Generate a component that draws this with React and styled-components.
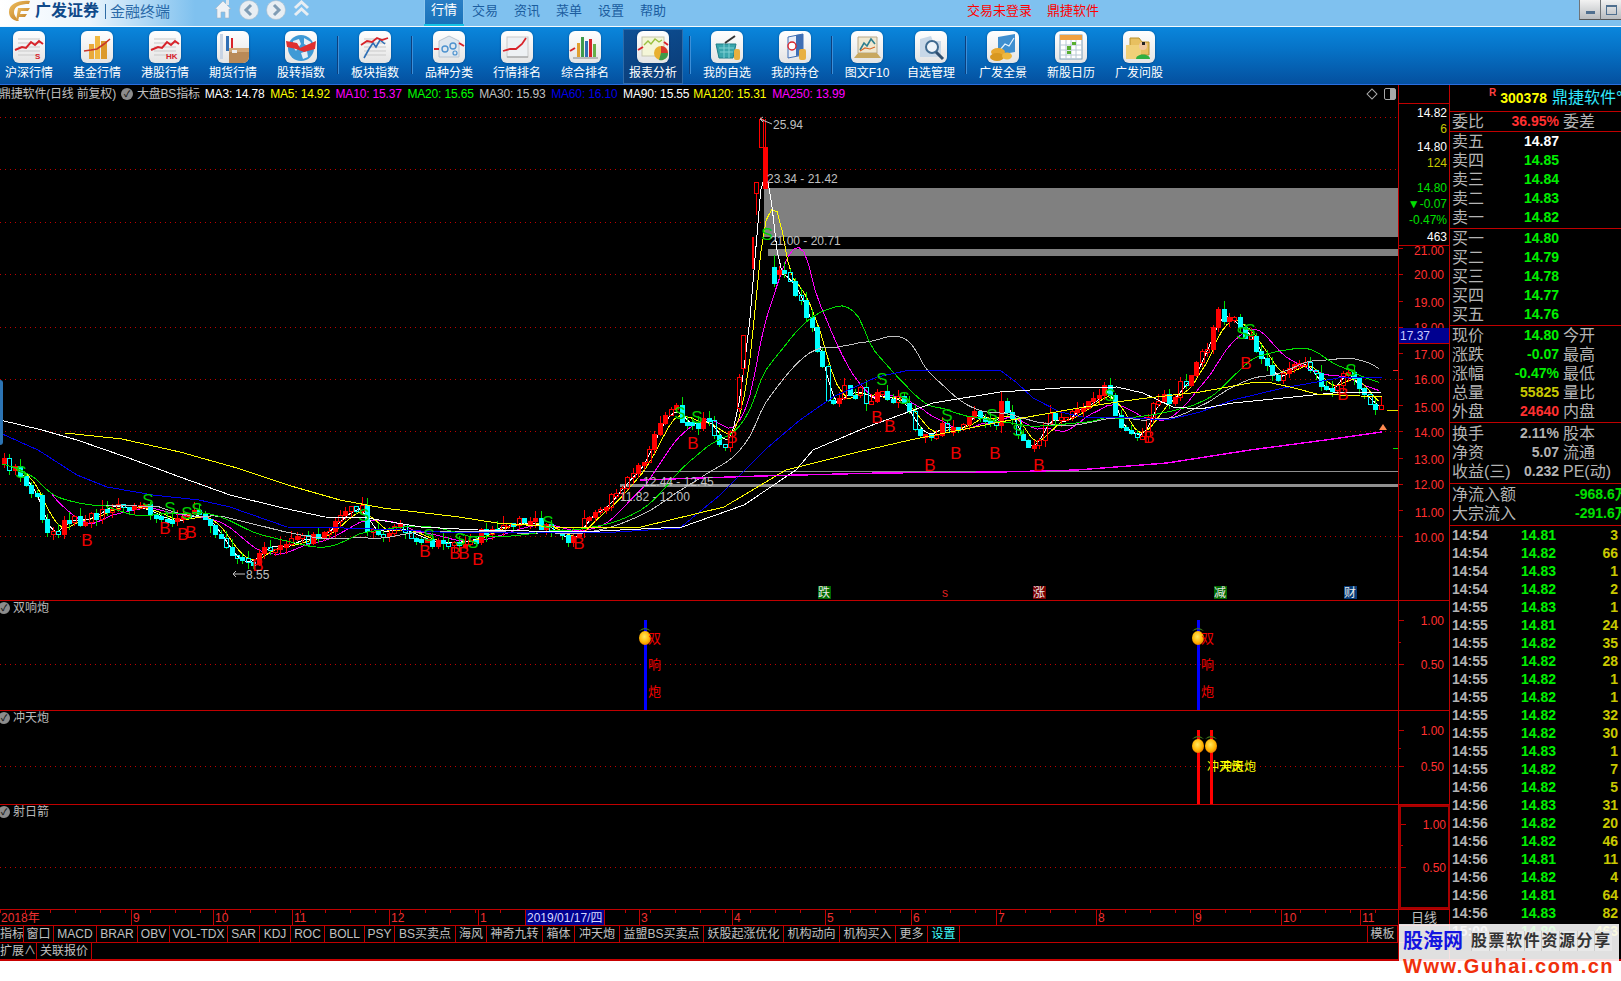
import { Fragment } from 'react';
import styled, { createGlobalStyle } from 'styled-components';

const RED_LINE = '#c00000';
const UI_FONT = '"Liberation Sans", "Noto Sans CJK SC", sans-serif';

const GlobalStyle = createGlobalStyle`
  html, body {
    margin: 0;
    background: #fff;
    overflow: hidden;
  }
  * {
    box-sizing: border-box;
  }
`;

/* ---------- chart data, all in screen pixels ---------- */

const priceKnots = [
  [0, 463], [8, 467], [19, 475], [27, 487], [36, 500], [44, 533], [55, 533], [63, 520], [80, 520], [92, 517],
  [107, 505], [122, 508], [142, 508], [157, 517], [176, 522], [188, 515], [203, 517], [216, 533], [230, 555],
  [237, 563], [253, 560], [264, 545], [283, 548], [295, 540], [318, 538], [329, 527], [348, 510], [360, 508],
  [365, 527], [383, 533], [394, 527], [413, 535], [432, 543], [448, 543], [471, 540], [486, 530], [517, 523],
  [543, 525], [563, 540], [574, 537], [586, 515], [600, 510], [625, 480], [640, 465], [650, 440], [660, 420],
  [673, 407], [683, 425], [697, 423], [707, 420], [720, 447], [730, 433], [733, 408], [738, 378], [742, 340],
  [748, 300], [754, 190], [760, 122], [764, 170], [770, 270], [783, 278], [789, 280], [795, 295], [807, 320],
  [815, 350], [820, 360], [825, 397], [833, 410], [842, 390], [847, 395], [852, 397], [857, 383], [865, 403],
  [877, 393], [883, 400], [893, 397], [905, 408], [913, 428], [930, 437], [938, 423], [948, 430], [957, 433],
  [965, 418], [980, 413], [992, 430], [1000, 403], [1010, 417], [1018, 443], [1033, 448], [1040, 430], [1045, 413],
  [1053, 423], [1067, 420], [1075, 407], [1088, 405], [1100, 393], [1106, 380], [1110, 407], [1115, 423],
  [1127, 433], [1140, 437], [1147, 417], [1155, 398], [1172, 402], [1180, 380], [1190, 380], [1198, 357],
  [1208, 340], [1215, 313], [1223, 317], [1233, 323], [1242, 333], [1250, 338], [1258, 357], [1268, 373],
  [1280, 380], [1287, 367], [1295, 360], [1305, 367], [1315, 380], [1322, 393], [1333, 387], [1343, 367],
  [1350, 380], [1357, 393], [1367, 398], [1373, 408], [1383, 410],
];

const ma60 = [
  [0, 433], [38, 450], [77, 475], [107, 487], [153, 495], [199, 500], [230, 507], [287, 527], [344, 528], [402, 530],
  [459, 533], [536, 532], [600, 533], [680, 528], [720, 495], [767, 448], [800, 420], [833, 397], [877, 377],
  [910, 370], [1000, 370], [1017, 383], [1033, 398], [1060, 412], [1083, 417], [1133, 418], [1167, 420],
  [1200, 412], [1233, 400], [1283, 388], [1317, 382], [1343, 377], [1382, 377],
];

const ma90 = [
  [0, 420], [42, 430], [77, 440], [126, 457], [180, 477], [230, 495], [283, 508], [325, 517], [367, 518], [421, 527],
  [478, 530], [579, 532], [682, 527], [744, 505], [796, 470], [813, 450], [867, 427], [933, 403], [1000, 392],
  [1060, 388], [1117, 387], [1143, 393], [1173, 407], [1200, 409], [1233, 403], [1283, 398], [1333, 393], [1382, 392],
];

const ma120 = [
  [65, 433], [122, 439], [180, 452], [237, 468], [291, 486], [340, 500], [383, 508], [459, 517], [497, 523],
  [555, 527], [641, 527], [724, 507], [786, 470], [858, 452], [910, 440], [1000, 422], [1067, 410], [1117, 402],
  [1147, 398], [1200, 392], [1250, 383], [1267, 382], [1290, 387], [1317, 394], [1382, 397],
];

const ma250 = [
  [640, 480], [760, 476], [880, 473], [1000, 472], [1077, 470], [1167, 463], [1250, 450], [1333, 439], [1382, 432],
];

const buyMarks = [
  [87, 540], [165, 528], [183, 534], [191, 532], [258, 565], [425, 551], [455, 553], [464, 553], [478, 559], [579, 543],
  [732, 437], [693, 443], [877, 417], [890, 426], [930, 465], [956, 453], [995, 453], [1039, 465], [1149, 437],
  [1246, 363], [1343, 394],
];

const sellMarks = [
  [21, 472], [148, 500], [170, 508], [187, 513], [197, 509], [364, 515], [429, 535], [460, 539], [473, 542], [548, 522],
  [767, 234], [680, 413], [697, 417], [882, 379], [904, 398], [947, 415], [992, 415], [1018, 430], [1110, 395],
  [1242, 333], [1250, 330], [1351, 370],
];

// the spike does not follow the interpolated series, it has gaps
const peakCandles = [
  { x: 737, top: 377, bottom: 408, high: 374, low: 412, up: true, solid: false },
  { x: 741, top: 335, bottom: 368, high: 335, low: 375, up: true, solid: false },
  { x: 750, top: 237, bottom: 268, high: 237, low: 268, up: true, solid: true, w: 1 },
  { x: 754, top: 182, bottom: 193, high: 182, low: 215, up: true, solid: false },
  { x: 759, top: 119, bottom: 147, high: 118, low: 147, up: true, solid: false },
  { x: 763, top: 147, bottom: 188, high: 119, low: 188, up: true, solid: true },
  { x: 772, top: 267, bottom: 283, high: 255, low: 287, up: false, solid: true },
];

const mainGrid = [117, 169, 222, 274, 327, 379, 431, 484, 536];

const mainScale = [
  ['21.00', 248, 250], ['20.00', 274, 274], ['19.00', 301, 302], ['18.00', 327, 327], ['17.00', 353, 354],
  ['16.00', 379, 379], ['15.00', 405, 407], ['14.00', 431, 432], ['13.00', 458, 459], ['12.00', 484, 484],
  ['11.00', 510, 512], ['10.00', 536, 537],
];

function makeRandom(seed) {
  let s = seed;
  return () => {
    s = (s * 16807) % 2147483647;
    return (s - 1) / 2147483646;
  };
}

function interpolate(points, x) {
  for (let i = 1; i < points.length; i++) {
    if (x <= points[i][0]) {
      const [x0, y0] = points[i - 1];
      const [x1, y1] = points[i];
      return y0 + ((y1 - y0) * (x - x0)) / (x1 - x0 || 1);
    }
  }
  return points[points.length - 1][1];
}

function buildCandles() {
  const random = makeRandom(4711);
  const list = [];
  let prev = 463;
  for (let x = 2; x <= 1384; x += 5.42) {
    const base = interpolate(priceKnots, x);
    const close = base + (random() - 0.5) * 11;
    const top = Math.min(prev, close);
    let bottom = Math.max(prev, close);
    if (bottom - top < 3) bottom = top + 3;
    const up = close < prev;
    list.push({
      x,
      base,
      top,
      bottom,
      up,
      high: top - random() * 9,
      low: bottom + random() * 7,
      solid: up ? random() > 0.45 : random() > 0.2,
    });
    prev = close;
  }
  return list;
}

const candles = buildCandles();

function movingAverage(period) {
  return candles
    .map((c, i) => {
      const from = Math.max(0, i - period + 1);
      let sum = 0;
      for (let k = from; k <= i; k++) sum += candles[k].base;
      return `${c.x.toFixed(1)},${(sum / (i - from + 1)).toFixed(1)}`;
    })
    .join(' ');
}

const toPoints = (list) => list.map((p) => p.join(',')).join(' ');

/* ---------- top bar ---------- */

const TopBar = styled.header`
  display: flex;
  height: 27px;
  background: #7fc1ef;
  border-bottom: 1px solid #f4fbff;
  font-family: ${UI_FONT};
`;

const LogoBlock = styled.div`
  display: flex;
  align-items: center;
  width: 214px;
  padding: 0 0 4px 8px;
  background: linear-gradient(90deg, #fff 0, #e9f4fc 90px, #7fc1ef 195px);
`;

const BrandName = styled.span`
  margin-left: 3px;
  font-size: 16px;
  line-height: 18px;
  font-weight: 700;
  color: #0f4a8a;
  white-space: nowrap;
`;

const ProductName = styled.span`
  margin-left: 6px;
  padding-left: 4px;
  border-left: 1px solid #2f6ca5;
  font-size: 15px;
  line-height: 15px;
  color: #2a6aa8;
  white-space: nowrap;
`;

const NavIcons = styled.div`
  display: flex;
  align-items: flex-start;
  gap: 7px;
  width: 210px;
`;

const MenuTab = styled.div`
  display: flex;
  align-items: center;
  justify-content: center;
  width: ${(p) => (p.$active ? '40px' : '42px')};
  padding-bottom: 4px;
  font-size: 13px;
  line-height: 16px;
  color: ${(p) => (p.$active ? '#fff' : '#1b5d9f')};
  background: ${(p) => (p.$active ? 'linear-gradient(180deg, #2a7fc6, #1872ba)' : 'none')};
  border-bottom: ${(p) => (p.$active ? '2px solid #16c4e6' : 'none')};
  box-shadow: ${(p) => (p.$active ? 'inset 1px 0 #8fc8ee, inset -1px 0 #8fc8ee' : 'none')};
`;

const LoginStatus = styled.div`
  display: flex;
  align-items: center;
  gap: 15px;
  margin-left: 293px;
  padding-bottom: 4px;
  font-size: 13px;
  line-height: 16px;
  color: #ff0000;
`;

const WindowButtons = styled.div`
  display: flex;
  margin-left: auto;
  height: 20px;
`;

const WindowButton = styled.div`
  display: flex;
  align-items: center;
  justify-content: center;
  width: 21px;
  background: linear-gradient(180deg, #f2f2f2, #b8bcc0);
  border-left: 1px solid #6f7478;
  border-bottom: 1px solid #555;
`;

const MinimizeMark = styled.i`
  display: block;
  width: 9px;
  height: 3px;
  margin-top: 6px;
  background: #4f6f8f;
`;

const MaximizeMark = styled.i`
  display: block;
  width: 11px;
  height: 10px;
  border: 1px solid #4f6f8f;
  border-top-width: 2px;
`;

/* ---------- tool bar ---------- */

const ToolBar = styled.nav`
  display: flex;
  width: 1626px;
  height: 58px;
  margin-left: -5px;
  background: linear-gradient(180deg, #0a86dc 0, #0672c6 40%, #04509f 100%);
  border-bottom: 1px solid #2a6ee0;
  font-family: ${UI_FONT};
`;

const ToolItem = styled.div`
  position: relative;
  display: flex;
  flex-direction: column;
  align-items: center;
  flex: none;
  width: ${(p) => p.$w || 68}px;
  padding-top: 4px;
  font-size: 12px;
  color: #fff;
  white-space: nowrap;

  &::before {
    content: '';
    display: ${(p) => (p.$selected ? 'block' : 'none')};
    position: absolute;
    top: 2px;
    bottom: 0;
    left: 4px;
    right: 4px;
    background: linear-gradient(160deg, #0d4f94, #0a3a74);
    border: 1px solid #2e6ba8;
  }
`;

const IconTile = styled.div`
  position: relative;
  width: 32px;
  height: 32px;
  border-radius: 6px;
  background: linear-gradient(180deg, #ffffff, #e4e4e4);
  box-shadow: 0 0 2px rgba(0, 30, 70, 0.55);
  overflow: hidden;
`;

const ToolLabel = styled.span`
  position: relative;
  margin-top: 2px;
  line-height: 16px;
`;

const ToolSeparator = styled.div`
  flex: none;
  width: 6px;
  margin: 9px 0 10px;
  background: linear-gradient(90deg, transparent 2px, #0c3f7d 2px, #0c3f7d 3px, #3d8fd8 3px, #3d8fd8 4px, transparent 4px);
`;

const ToolGlyph = styled.svg`
  display: block;
  font-family: ${UI_FONT};
`;

const lineGrid = (
  <g stroke="#c9c9c9" strokeWidth="1">
    <path d="M5 8H27M5 12H27M5 16H27M5 20H27M5 24H27" />
  </g>
);

const toolIcons = {
  shanghai: (
    <>
      {lineGrid}
      <polyline points="2,19 9,16 13,17 18,11 22,14 26,10 30,13" fill="none" stroke="#d8232a" strokeWidth="2" />
      <text x="22" y="28" fontSize="8" fontWeight="700" fill="#d8232a">S</text>
    </>
  ),
  fund: (
    <>
      <rect x="8" y="13" width="5" height="15" fill="#e9a93a" />
      <rect x="14" y="5" width="5" height="23" fill="#f0b840" />
      <rect x="20" y="10" width="6" height="18" fill="#dc9a2c" />
      <polyline points="3,20 10,19 16,18 23,13 29,8" fill="none" stroke="#c8352a" strokeWidth="1.6" />
    </>
  ),
  hongkong: (
    <>
      {lineGrid}
      <polyline points="2,19 9,16 13,17 18,11 22,14 26,10 30,13" fill="none" stroke="#d8232a" strokeWidth="2" />
      <text x="17" y="28" fontSize="8" fontWeight="700" fill="#d8232a">HK</text>
    </>
  ),
  futures: (
    <>
      <rect x="3" y="3" width="3" height="25" fill="#c8d4e4" />
      <rect x="9" y="5" width="3" height="15" fill="#2f6fb5" />
      <rect x="14" y="7" width="2" height="12" fill="#d8232a" />
      <path d="M12 17H32V32H12Z" fill="#b98a58" />
      <path d="M12 17H32V21H12Z" fill="#d2a878" />
      <rect x="15" y="19" width="5" height="3" fill="#eee" />
    </>
  ),
  globe: (
    <>
      <circle cx="16" cy="17" r="13" fill="#3f9ad6" />
      <path d="M8 10l6-2 2 5-5 7-3-4ZM19 7l7 4-1 5-6-3ZM16 22l6-2 1 6-5 2Z" fill="#e8eef4" />
      <path d="M1 10l11 2 3 5 9-4 7-3-1 8-11 3-8-3-9-2Z" fill="#e03030" />
    </>
  ),
  board: (
    <>
      {lineGrid}
      <polyline points="5,27 10,18 14,12 17,16 21,9 26,13" fill="none" stroke="#2f6fb5" strokeWidth="1.6" />
      <polyline points="2,14 8,10 13,11 18,7 23,9 29,7" fill="none" stroke="#d8232a" strokeWidth="1.8" />
    </>
  ),
  category: (
    <>
      <path d="M6 10L16 5L26 10V26H6Z" fill="#dfe7ef" stroke="#b8c4d0" />
      <circle cx="12" cy="18" r="3" fill="none" stroke="#4f93cf" strokeWidth="1.4" />
      <circle cx="20" cy="15" r="3" fill="none" stroke="#4f93cf" strokeWidth="1.4" />
      <circle cx="22" cy="22" r="2" fill="none" stroke="#4f93cf" strokeWidth="1.2" />
      <path d="M1 18H6M26 12L31 15" stroke="#d8232a" strokeWidth="2" />
    </>
  ),
  ranking: (
    <>
      <rect x="6" y="6" width="21" height="20" fill="#eef1f4" stroke="#c9c9c9" />
      <polyline points="2,20 9,18 15,18 21,13 25,7" fill="none" stroke="#d8232a" strokeWidth="1.8" />
      <path d="M6 26H27" stroke="#999" />
    </>
  ),
  composite: (
    <>
      <rect x="8" y="12" width="3" height="14" fill="#e0a030" />
      <rect x="12" y="6" width="3" height="20" fill="#3f9a4a" />
      <rect x="16" y="10" width="3" height="16" fill="#2f6fb5" />
      <rect x="20" y="8" width="3" height="18" fill="#d8232a" />
      <rect x="24" y="13" width="3" height="13" fill="#68b04a" />
      <path d="M4 27H29" stroke="#888" />
      <path d="M1 20L6 17" stroke="#d8232a" strokeWidth="2" />
    </>
  ),
  report: (
    <>
      <rect x="5" y="6" width="22" height="19" fill="#f4f6d8" stroke="#c8c8b0" />
      <polyline points="7,14 11,10 14,13 18,8 22,11 25,9" fill="none" stroke="#9ac040" strokeWidth="1.4" />
      <path d="M1 19L6 16M27 11L31 14" stroke="#d8232a" strokeWidth="2" />
      <circle cx="24" cy="22" r="7" fill="#e8b030" />
      <path d="M24 22V15A7 7 0 0 1 31 22Z" fill="#d8382a" />
      <path d="M24 22H31A7 7 0 0 1 22 29Z" fill="#3f9a4a" />
    </>
  ),
  basket: (
    <>
      <path d="M5 13H25L22 27H8Z" fill="#3aa6ad" stroke="#1f7e88" />
      <path d="M8 17H23M9 21H22M13 13V27M18 13V27" stroke="#7fd0d4" />
      <path d="M14 12L24 5" stroke="#333" strokeWidth="2" />
      <rect x="23" y="18" width="6" height="11" rx="2" fill="#e8b040" />
    </>
  ),
  position: (
    <>
      <path d="M9 6L24 3V24L9 27Z" fill="#e8eef8" stroke="#3f6fb5" />
      <path d="M17 4L24 3V24L17 25Z" fill="#3f6fb5" />
      <circle cx="13" cy="15" r="4" fill="#fff" stroke="#d8232a" strokeWidth="1.4" />
      <rect x="20" y="18" width="7" height="11" rx="2" fill="#e8b040" />
    </>
  ),
  f10: (
    <>
      <path d="M7 6H26V22H7Z" fill="#f0e8d0" stroke="#b8a888" />
      <polyline points="9,19 13,12 16,15 20,8 24,13" fill="none" stroke="#2f7f8f" strokeWidth="1.6" />
      <polyline points="9,20 14,17 19,18 24,16" fill="none" stroke="#d86a2a" strokeWidth="1.2" />
      <path d="M3 27L7 22H26L30 27Z" fill="#c8a860" />
    </>
  ),
  manage: (
    <>
      <path d="M5 8L16 5L18 10H26V26H5Z" fill="#c8d8e8" />
      <circle cx="17" cy="16" r="6" fill="#eef4fa" stroke="#3f6a90" strokeWidth="2" />
      <path d="M21 21L28 28" stroke="#2f4f70" strokeWidth="3" />
    </>
  ),
  overview: (
    <>
      <path d="M11 6L28 3V21L11 24Z" fill="#3f8fd0" />
      <polyline points="13,19 18,13 22,15 27,7" fill="none" stroke="#e8f4ff" strokeWidth="1.2" />
      <ellipse cx="11" cy="21" rx="7" ry="4" fill="#e8a830" />
      <ellipse cx="10" cy="26" rx="7" ry="4" fill="#d89820" />
      <ellipse cx="20" cy="25" rx="5" ry="3.5" fill="#eeb840" />
    </>
  ),
  calendar: (
    <>
      <rect x="5" y="4" width="22" height="24" fill="#fff" stroke="#7f9fb8" />
      <rect x="5" y="4" width="22" height="5" fill="#f0a040" />
      <path d="M5 14H27M5 19H27M5 24H27M11 9V28M16 9V28M21 9V28" stroke="#b8c8d4" />
      <rect x="12" y="15" width="4" height="4" fill="#58b030" />
      <rect x="17" y="11" width="4" height="3" fill="#58b030" />
      <rect x="12" y="20" width="4" height="3" fill="#58b030" />
    </>
  ),
  ask: (
    <>
      <path d="M7 7H16L19 11H26V24H7Z" fill="#e8c060" stroke="#b8902c" />
      <path d="M3 14H18V28H3Z" fill="#f0d078" />
      <circle cx="20" cy="15" r="4" fill="#f0c8a0" />
      <path d="M19 11H22V14H19Z" fill="#222" />
      <path d="M13 28C13 22 27 22 27 28Z" fill="#30b040" />
    </>
  ),
};

const toolSections = [
  [
    ['沪深行情', 'shanghai'], ['基金行情', 'fund'], ['港股行情', 'hongkong'], ['期货行情', 'futures'], ['股转指数', 'globe'],
  ],
  [['板块指数', 'board']],
  [['品种分类', 'category'], ['行情排名', 'ranking'], ['综合排名', 'composite'], ['报表分析', 'report', 68, true]],
  [['我的自选', 'basket'], ['我的持仓', 'position']],
  [['图文F10', 'f10', 64], ['自选管理', 'manage', 64]],
  [['广发全景', 'overview'], ['新股日历', 'calendar'], ['广发问股', 'ask']],
];

/* ---------- chart columns ---------- */

const Workspace = styled.main`
  display: flex;
  height: 876px;
  background: #000;
  border-bottom: 2px solid #c80000;
  font-family: ${UI_FONT};
`;

const ChartColumn = styled.div`
  display: flex;
  flex-direction: column;
  flex: none;
  width: 1450px;
`;

const ChartRow = styled.section`
  display: flex;
  flex: ${(p) => (p.$h ? 'none' : '1')};
  height: ${(p) => (p.$h ? `${p.$h}px` : 'auto')};
  border-bottom: ${(p) => (p.$open ? 'none' : `1px solid ${RED_LINE}`)};
`;

const Pane = styled.div`
  position: relative;
  flex: none;
  width: 1398px;
`;

const AxisCell = styled.div`
  display: flex;
  flex-direction: column;
  flex: none;
  width: 52px;
  border-left: 1px solid ${RED_LINE};
  border-right: 1px solid ${RED_LINE};
`;

const ChartSvg = styled.svg`
  display: block;
  font-family: ${UI_FONT};
`;

const Legend = styled.div`
  position: absolute;
  top: -1px;
  left: -1px;
  right: 0;
  display: flex;
  align-items: center;
  height: 19px;
  font-size: 12px;
  line-height: 16px;
  color: #c0c0c0;
  white-space: nowrap;
`;

const LegendTitle = styled.span`
  letter-spacing: -0.2px;
`;

const LegendItem = styled.span`
  margin-left: ${(p) => p.$gap || 5.6}px;
  color: ${(p) => p.$color};
  letter-spacing: -0.16px;
`;

const ToggleDot = styled.i`
  display: inline-flex;
  align-items: center;
  justify-content: center;
  width: 12px;
  height: 12px;
  margin: ${(p) => p.$margin || '0 4px 0 5px'};
  border-radius: 50%;
  background: #8c8c8c;
  color: #222;
  font-size: 9px;
  font-style: normal;
  font-weight: 700;
`;

const LegendTools = styled.div`
  display: flex;
  align-items: center;
  gap: 8px;
  margin-left: auto;
  margin-right: 2px;
`;

const DiamondMark = styled.i`
  display: block;
  width: 8px;
  height: 8px;
  border: 1px solid #a8a8a8;
  transform: rotate(45deg);
`;

const PanelMark = styled.i`
  display: block;
  width: 12px;
  height: 12px;
  border: 1px solid #a8a8a8;
  border-radius: 2px;
  background: linear-gradient(90deg, transparent 5px, #a8a8a8 5px);
`;

const SideHandle = styled.div`
  position: absolute;
  top: 295px;
  left: 0;
  width: 3px;
  height: 65px;
  border-radius: 0 3px 3px 0;
  background: #2c74b4;
`;

const PaneTitle = styled.div`
  position: absolute;
  top: -1px;
  left: -2px;
  display: flex;
  align-items: center;
  height: 16px;
  font-size: 12px;
  line-height: 16px;
  color: #b8b8b8;
`;

const AxisHead = styled.div`
  flex: none;
  height: 19px;
  border-bottom: 1px solid ${RED_LINE};
`;

const AxisInfo = styled.div`
  flex: none;
  height: 142px;
  padding: 1px 2px 0 0;
  border-bottom: 1px solid ${RED_LINE};
  font-size: 12px;
  line-height: 16px;
  text-align: right;
`;

const InfoValue = styled.div`
  height: 16.4px;
  margin-top: ${(p) => p.$gap || 0}px;
  color: ${(p) => p.$color};
`;

const AxisBox = styled.div`
  flex: 1;
  margin: ${(p) => (p.$boxed ? '0 -1px 0 0' : 0)};
  border: ${(p) => (p.$boxed ? '2px solid #a80000' : 'none')};
`;

const AxisCaption = styled.div`
  height: 100%;
  font-size: 13px;
  line-height: 16px;
  text-align: center;
  color: #c0c0c0;
`;

/* ---------- time axis and tabs ---------- */

const TimeAxis = styled.div`
  display: flex;
  flex: none;
  width: 1398px;
  background: repeating-linear-gradient(90deg, ${RED_LINE} 0 1px, transparent 1px 25px) 0 0 / 100% 3px no-repeat;
`;

const TimeCell = styled.div`
  flex: none;
  width: ${(p) => p.$w}px;
  padding-left: 1px;
  border-left: ${(p) => (p.$first ? 'none' : `1px solid ${RED_LINE}`)};
  font-size: 12px;
  line-height: 16px;
  color: ${(p) => (p.$picked ? '#d8d8ff' : '#f03030')};
  background: ${(p) => (p.$picked ? '#000090' : 'none')};
  white-space: nowrap;
`;

const TabStrip = styled.div`
  display: flex;
  flex: none;
  width: 1398px;
  border-right: ${(p) => (p.$bare ? 'none' : `1px solid ${RED_LINE}`)};
`;

const TabItem = styled.div`
  flex: none;
  width: ${(p) => p.$w}px;
  border-right: ${(p) => (p.$bare ? 'none' : `1px solid ${RED_LINE}`)};
  border-left: ${(p) => (p.$left ? `1px solid ${RED_LINE}` : 'none')};
  margin-left: ${(p) => (p.$push ? 'auto' : 0)};
  font-size: 12px;
  line-height: 17px;
  text-align: center;
  color: ${(p) => (p.$active ? '#40ffff' : '#c0c0c0')};
  white-space: nowrap;
  overflow: hidden;
`;

/* ---------- quote panel ---------- */

const QuotePanel = styled.aside`
  flex: none;
  width: 171px;
  overflow: hidden;
`;

const QuoteTitle = styled.div`
  display: flex;
  align-items: center;
  height: 27px;
  padding-left: 39px;
  border-bottom: 1px solid ${RED_LINE};
  white-space: nowrap;
`;

const RiskFlag = styled.span`
  align-self: flex-start;
  margin: 2px 4px 0 0;
  font-size: 10px;
  font-weight: 700;
  color: #ff4040;
`;

const StockCode = styled.span`
  font-size: 14px;
  line-height: 16px;
  font-weight: 700;
  color: #ffff00;
`;

const StockName = styled.span`
  margin-left: 5px;
  font-size: 16px;
  line-height: 18px;
  color: #30e8ff;
`;

const QuoteSection = styled.div`
  display: flex;
  flex-direction: column;
  justify-content: center;
  height: ${(p) => p.$h}px;
  padding-bottom: 1px;
  border-bottom: 1px solid ${RED_LINE};
`;

const QuoteRow = styled.div`
  display: grid;
  grid-template-columns: 49px 58px 1fr;
  align-items: center;
  height: 19px;
  padding-left: 2px;
  font-size: 16px;
  line-height: 19px;
  color: #b4b4b4;
  white-space: nowrap;
`;

const QuoteValue = styled.span`
  font-size: 14px;
  font-weight: 700;
  text-align: right;
  color: ${(p) => p.$color};
`;

const QuoteSide = styled.span`
  padding-left: 4px;
`;

const FlowRow = styled.div`
  display: grid;
  grid-template-columns: 123px 1fr;
  align-items: center;
  height: 19px;
  padding-left: 2px;
  font-size: 16px;
  line-height: 19px;
  color: #b4b4b4;
  white-space: nowrap;
`;

const FlowValue = styled.span`
  font-size: 14px;
  font-weight: 700;
  color: #00e000;
`;

const TickRow = styled.div`
  display: grid;
  grid-template-columns: 69px 38px 1fr;
  align-items: center;
  height: 18px;
  padding: 0 3px 0 2px;
  font-size: 14px;
  font-weight: 700;
`;

const TickTime = styled.span`
  color: #b4b4b4;
`;

const TickPrice = styled.span`
  color: #00f000;
`;

const TickVolume = styled.span`
  text-align: right;
  color: #c8c800;
`;

const Frame = styled.div`
  position: relative;
  width: 1621px;
  height: 981px;
  overflow: hidden;
`;

const Watermark = styled.div`
  position: absolute;
  top: 924px;
  left: 1399px;
  width: 220px;
  height: 57px;
  padding: 4px 4px 0;
  background: rgba(255, 255, 255, 0.88);
  font-family: ${UI_FONT};
`;

const WatermarkTop = styled.div`
  display: flex;
  align-items: center;
  height: 26px;
  white-space: nowrap;
`;

const WatermarkSite = styled.span`
  flex: none;
  font-size: 20px;
  line-height: 24px;
  font-weight: 700;
  color: #1414e0;
`;

const WatermarkSlogan = styled.span`
  flex: none;
  margin-left: 8px;
  font-family: "Liberation Serif", "Noto Sans CJK SC", serif;
  font-size: 16px;
  line-height: 20px;
  font-weight: 700;
  letter-spacing: 1.6px;
  color: #333;
  background: repeating-linear-gradient(90deg, #ccc 0 1px, #e8e8e8 1px 17.6px);
`;

const WatermarkUrl = styled.div`
  font-size: 20px;
  font-weight: 700;
  line-height: 24px;
  letter-spacing: 1.5px;
  color: #f0300c;
  white-space: nowrap;
`;

/* ---------- small chart parts ---------- */

const Fruit = ({ x, y }) => (
  <g>
    <path d={`M${x - 6} ${y - 7}Q${x} ${y - 13} ${x + 6} ${y - 7}L${x} ${y - 9}Z`} fill="#3f7a1a" />
    <ellipse cx={x} cy={y} rx="6" ry="7" fill="url(#fruitGold)" />
  </g>
);

const MarkerTag = ({ x, bg, children, color = '#e8e8e8' }) => (
  <g>
    <rect x={x - 6} y={586} width="13" height="13" fill={bg} />
    <text x={x} y={597} fontSize="12" textAnchor="middle" fill={color}>{children}</text>
  </g>
);

const Scale = ({ top, height, items, minor = [] }) => (
  <ChartSvg width="50" height={height} viewBox={`1399 ${top} 50 ${height}`}>
    {items.map(([label, tick, textY]) => (
      <g key={label}>
        <line x1="1399" x2="1404" y1={tick + 0.5} y2={tick + 0.5} stroke={RED_LINE} />
        <text x="1444" y={textY + 5} fontSize="12" textAnchor="end" fill="#ff3030">{label}</text>
      </g>
    ))}
    {minor.map((y) => (
      <line key={y} x1="1399" x2="1401" y1={y + 0.5} y2={y + 0.5} stroke={RED_LINE} />
    ))}
  </ChartSvg>
);

const PriceScale = () => (
  <ChartSvg width="50" height="354" viewBox="1399 246 50 354">
    {mainScale.map(([label, tick, textY]) => (
      <g key={label}>
        <line x1="1399" x2="1403" y1={tick + 0.5} y2={tick + 0.5} stroke={RED_LINE} />
        <text x="1444" y={textY + 5} fontSize="12" textAnchor="end" fill="#ff3030">{label}</text>
      </g>
    ))}
    <rect x="1399" y="328" width="50" height="15" fill="#000090" />
    <line x1="1399" x2="1449" y1="343.5" y2="343.5" stroke={RED_LINE} />
    <text x="1400" y="340" fontSize="12" fill="#c8c8ff">17.37</text>
  </ChartSvg>
);

const signalGrid = (y) => (
  <line x1="0" x2="1398" y1={y + 0.5} y2={y + 0.5} stroke="#c00000" strokeDasharray="1 4" />
);

const fruitDefs = (
  <defs>
    <radialGradient id="fruitGold" cx="45%" cy="40%" r="65%">
      <stop offset="0%" stopColor="#ffe860" />
      <stop offset="65%" stopColor="#ffb400" />
      <stop offset="100%" stopColor="#e87000" />
    </radialGradient>
  </defs>
);

const Candle = ({ c }) => {
  const line = c.up ? '#ff0000' : '#00e000';
  const body = c.up ? '#ff0000' : '#00ffff';
  const w = c.w || 4;
  return (
    <g>
      <line x1={c.x + 2.5} x2={c.x + 2.5} y1={c.high} y2={c.top} stroke={line} />
      <line x1={c.x + 2.5} x2={c.x + 2.5} y1={c.bottom} y2={c.low} stroke={line} />
      <rect
        x={c.x + 0.5 + (w === 1 ? 1.5 : 0)}
        y={c.top}
        width={w}
        height={c.bottom - c.top}
        fill={c.solid ? body : 'none'}
        stroke={body}
      />
    </g>
  );
};

const MainChart = () => (
  <ChartSvg width="1398" height="515" viewBox="0 85 1398 515">
    <g shapeRendering="crispEdges">
      {mainGrid.map((y) => (
        <line key={y} x1="0" x2="1398" y1={y + 0.5} y2={y + 0.5} stroke="#c00000" strokeDasharray="1 4" />
      ))}
      <rect x="764" y="188" width="634" height="49" fill="#808080" />
      <rect x="768" y="249" width="630" height="7" fill="#808080" />
      <rect x="640" y="471" width="758" height="1" fill="#909090" />
      <rect x="620" y="484" width="778" height="3" fill="#909090" />
      <g fill="none">
        <polyline points={movingAverage(10)} stroke="#ff00ff" />
        <polyline points={movingAverage(5)} stroke="#ffff00" />
        <polyline points={movingAverage(3)} stroke="#ffffff" />
      </g>
      {[...candles.filter((c) => c.x < 731 || c.x > 776), ...peakCandles].map((c) => (
        <Candle key={c.x} c={c} />
      ))}
      <g fill="none">
        <polyline points={movingAverage(30)} stroke="#c0c0c0" />
        <polyline points={movingAverage(20)} stroke="#00e000" />
        <polyline points={toPoints(ma60)} stroke="#0000f0" />
        <polyline points={toPoints(ma90)} stroke="#ffffff" />
        <polyline points={toPoints(ma120)} stroke="#ffff00" />
        <polyline points={toPoints(ma250)} stroke="#ff00ff" strokeWidth="1.4" />
      </g>
      <rect x="1387" y="410" width="11" height="1" fill="#e8e800" />
      <rect x="1393" y="370" width="5" height="1" fill="#ff2020" />
      <rect x="1393" y="448" width="5" height="1" fill="#00e000" />
    </g>
    <path d="M1379 430L1383 424L1387 430Z" fill="#ff8a50" />
    <g fontSize="17">
      {buyMarks.map(([x, y]) => (
        <text key={`b${x}`} x={x} y={y + 6} textAnchor="middle" fill="#f00000">B</text>
      ))}
      {sellMarks.map(([x, y]) => (
        <text key={`s${x}`} x={x} y={y + 6} textAnchor="middle" fill="#00d000">S</text>
      ))}
    </g>
    <g fontSize="12" fill="#c0c0c0">
      <text x="773" y="129">25.94</text>
      <path d="M760 119L772 124M760 119L763 117M760 119L763 122" stroke="#c0c0c0" fill="none" />
      <text x="767" y="183">23.34 - 21.42</text>
      <text x="770" y="245">21.00 - 20.71</text>
      <text x="643" y="486">12.44 - 12.45</text>
      <text x="620" y="501">11.82 - 12.00</text>
      <text x="246" y="579">8.55</text>
      <path d="M233 574H245M233 574L236 571M233 574L236 577" stroke="#c0c0c0" fill="none" />
    </g>
    <MarkerTag x={824} bg="#006a00">跌</MarkerTag>
    <MarkerTag x={945} bg="#000" color="#e02020">s</MarkerTag>
    <MarkerTag x={1039} bg="#7a0000">涨</MarkerTag>
    <MarkerTag x={1220} bg="#006a00">减</MarkerTag>
    <MarkerTag x={1350} bg="#063a78">财</MarkerTag>
  </ChartSvg>
);

const DoubleSignal = () => (
  <ChartSvg width="1398" height="109" viewBox="0 601 1398 109">
    {fruitDefs}
    {signalGrid(664)}
    {[645, 1198].map((x) => (
      <g key={x}>
        <rect x={x - 1} y="620" width="3" height="90" fill="#0000ff" />
        <Fruit x={x} y={638} />
        <g fontSize="13" fill="#f00000">
          <text x={x + 3} y="643">双</text>
          <text x={x + 3} y="669">响</text>
          <text x={x + 3} y="696">炮</text>
        </g>
      </g>
    ))}
  </ChartSvg>
);

const RocketSignal = () => (
  <ChartSvg width="1398" height="93" viewBox="0 711 1398 93">
    {signalGrid(766)}
    {[1198, 1211].map((x) => (
      <g key={x}>
        <rect x={x - 1} y="730" width="3" height="74" fill="#ff0000" />
        <Fruit x={x} y={746} />
        <text x={x + 9} y="771" fontSize="12" fill="#ffff00">冲天炮</text>
      </g>
    ))}
  </ChartSvg>
);

const ArrowSignal = () => (
  <ChartSvg width="1398" height="104" viewBox="0 805 1398 104">
    {signalGrid(867)}
  </ChartSvg>
);

const HomeIcon = () => (
  <svg width="18" height="19" viewBox="0 0 18 19">
    <path d="M9 1L17 9H15V18H11V12H7V18H3V9H1Z" fill="#eef2f6" stroke="#9fb4c8" strokeWidth="0.6" />
    <rect x="12" y="0" width="3" height="5" fill="#dfe6ec" />
  </svg>
);

const CircleArrow = ({ dir }) => (
  <svg width="20" height="20" viewBox="0 0 20 20">
    <circle cx="10" cy="10" r="9.5" fill="#e8eef3" stroke="#a8bccc" strokeWidth="0.6" />
    <path
      d={dir === 'left' ? 'M12 5L7 10L12 15' : 'M8 5L13 10L8 15'}
      fill="none"
      stroke="#7f9cb4"
      strokeWidth="3"
    />
  </svg>
);

const FoldIcon = () => (
  <svg width="17" height="18" viewBox="0 0 17 18">
    <path d="M2 8L8.5 2L15 8M2 15L8.5 9L15 15" fill="none" stroke="#e8eef3" strokeWidth="3" />
  </svg>
);

const BrandLogo = () => (
  <svg width="24" height="22" viewBox="0 0 24 22">
    <defs>
      <linearGradient id="brandGold" x1="0" y1="0" x2="1" y2="1">
        <stop offset="0%" stopColor="#f0c060" />
        <stop offset="100%" stopColor="#b8741c" />
      </linearGradient>
    </defs>
    <path d="M22 1C10 0 1 4 1 12C1 18 6 21 11 21C9 18 6 16 6 12C6 6 13 4 21 4Z" fill="url(#brandGold)" />
    <path d="M10 8H22L20 11H13L12 14H19L17 17H11L10 21H8Z" fill="url(#brandGold)" />
  </svg>
);

/* ---------- text data ---------- */

const legendItems = [
  ['MA3: 14.78', '#fff', 5],
  ['MA5: 14.92', '#ffff00'],
  ['MA10: 15.37', '#ff00ff'],
  ['MA20: 15.65', '#00ff00'],
  ['MA30: 15.93', '#c0c0c0'],
  ['MA60: 16.10', '#0000e8'],
  ['MA90: 15.55', '#fff'],
  ['MA120: 15.31', '#ffff00', 4],
  ['MA250: 13.99', '#ff00ff', 6],
];

const timeCells = [
  ['2018年', 131], ['9', 82], ['10', 79], ['11', 97], ['12', 89], ['1', 47], ['2019/01/17/四', 79, true], ['', 35],
  ['3', 93], ['4', 93], ['5', 86], ['6', 85], ['7', 100], ['8', 97], ['9', 88], ['10', 79], ['11', 38],
];

const tabs = [
  ['指标', 24], ['窗口', 30], ['MACD', 43], ['BRAR', 41], ['OBV', 32], ['VOL-TDX', 58], ['SAR', 32], ['KDJ', 31],
  ['ROC', 34], ['BOLL', 40], ['PSY', 30], ['BS买卖点', 61], ['海风', 31], ['神奇九转', 56], ['箱体', 32],
  ['冲天炮', 45], ['益盟BS买卖点', 84], ['妖股起涨优化', 80], ['机构动向', 56], ['机构买入', 56], ['更多', 32],
];

const sellRows = [
  ['卖五', '14.87', '#fff'], ['卖四', '14.85', '#00f000'], ['卖三', '14.84', '#00f000'], ['卖二', '14.83', '#00f000'],
  ['卖一', '14.82', '#00f000'],
];

const buyRows = [
  ['买一', '14.80'], ['买二', '14.79'], ['买三', '14.78'], ['买四', '14.77'], ['买五', '14.76'],
];

const statRows = [
  ['现价', '14.80', '#00f000', '今开'],
  ['涨跌', '-0.07', '#00f000', '最高'],
  ['涨幅', '-0.47%', '#00f000', '最低'],
  ['总量', '55825', '#c8c800', '量比'],
  ['外盘', '24640', '#ff3030', '内盘'],
];

const ratioRows = [
  ['换手', '2.11%', '#b4b4b4', '股本'],
  ['净资', '5.07', '#b4b4b4', '流通'],
  ['收益(三)', '0.232', '#b4b4b4', 'PE(动)'],
];

const ticks = [
  ['14:54', '14.81', '3'], ['14:54', '14.82', '66'], ['14:54', '14.83', '1'], ['14:54', '14.82', '2'],
  ['14:55', '14.83', '1'], ['14:55', '14.81', '24'], ['14:55', '14.82', '35'], ['14:55', '14.82', '28'],
  ['14:55', '14.82', '1'], ['14:55', '14.82', '1'], ['14:55', '14.82', '32'], ['14:55', '14.82', '30'],
  ['14:55', '14.83', '1'], ['14:55', '14.82', '7'], ['14:56', '14.82', '5'], ['14:56', '14.83', '31'],
  ['14:56', '14.82', '20'], ['14:56', '14.82', '46'], ['14:56', '14.81', '11'], ['14:56', '14.82', '4'],
  ['14:56', '14.81', '64'], ['14:56', '14.83', '82'], ['15:00', '14.80', '463'],
];

export default function App() {
  return (
    <Frame>
      <GlobalStyle />
      <TopBar>
        <LogoBlock>
          <BrandLogo />
          <BrandName>广发证券</BrandName>
          <ProductName>金融终端</ProductName>
        </LogoBlock>
        <NavIcons>
          <HomeIcon />
          <CircleArrow dir="left" />
          <CircleArrow dir="right" />
          <FoldIcon />
        </NavIcons>
        <MenuTab $active>行情</MenuTab>
        {['交易', '资讯', '菜单', '设置', '帮助'].map((t) => (
          <MenuTab key={t}>{t}</MenuTab>
        ))}
        <LoginStatus>
          <span>交易未登录</span>
          <span>鼎捷软件</span>
        </LoginStatus>
        <WindowButtons>
          <WindowButton><MinimizeMark /></WindowButton>
          <WindowButton><MaximizeMark /></WindowButton>
        </WindowButtons>
      </TopBar>

      <ToolBar>
        {toolSections.map((section, i) => (
          <Fragment key={section[0][0]}>
            {i > 0 && <ToolSeparator />}
            {section.map(([label, icon, w, selected]) => (
              <ToolItem key={label} $w={w} $selected={selected}>
                <IconTile>
                  <ToolGlyph width="32" height="32" viewBox="0 0 32 32">{toolIcons[icon]}</ToolGlyph>
                </IconTile>
                <ToolLabel>{label}</ToolLabel>
              </ToolItem>
            ))}
          </Fragment>
        ))}
      </ToolBar>

      <Workspace>
        <ChartColumn>
          <ChartRow $h={516}>
            <Pane>
              <MainChart />
              <Legend>
                <LegendTitle>鼎捷软件(日线 前复权)</LegendTitle>
                <ToggleDot>✓</ToggleDot>
                <LegendTitle>大盘BS指标</LegendTitle>
                {legendItems.map(([text, color, gap]) => (
                  <LegendItem key={text} $color={color} $gap={gap}>{text}</LegendItem>
                ))}
                <LegendTools>
                  <DiamondMark />
                  <PanelMark />
                </LegendTools>
              </Legend>
              <SideHandle />
            </Pane>
            <AxisCell>
              <AxisHead />
              <AxisInfo>
                <InfoValue $color="#fff">14.82</InfoValue>
                <InfoValue $color="#c8c800">6</InfoValue>
                <InfoValue $color="#fff" $gap={1}>14.80</InfoValue>
                <InfoValue $color="#c8c800">124</InfoValue>
                <InfoValue $color="#00e000" $gap={8}>14.80</InfoValue>
                <InfoValue $color="#00e000">▼-0.07</InfoValue>
                <InfoValue $color="#00e000">-0.47%</InfoValue>
                <InfoValue $color="#fff">463</InfoValue>
              </AxisInfo>
              <PriceScale />
            </AxisCell>
          </ChartRow>

          <ChartRow $h={110}>
            <Pane>
              <DoubleSignal />
              <PaneTitle><ToggleDot $margin="0 3px 0 0">✓</ToggleDot>双响炮</PaneTitle>
            </Pane>
            <AxisCell>
              <Scale top={601} height={109} items={[['1.00', 620, 620], ['0.50', 664, 664]]} minor={[642]} />
            </AxisCell>
          </ChartRow>

          <ChartRow $h={94}>
            <Pane>
              <RocketSignal />
              <PaneTitle><ToggleDot $margin="0 3px 0 0">✓</ToggleDot>冲天炮</PaneTitle>
            </Pane>
            <AxisCell>
              <Scale top={711} height={93} items={[['1.00', 730, 730], ['0.50', 766, 766]]} minor={[748]} />
            </AxisCell>
          </ChartRow>

          <ChartRow $h={105}>
            <Pane>
              <ArrowSignal />
              <PaneTitle><ToggleDot $margin="0 3px 0 0">✓</ToggleDot>射日箭</PaneTitle>
            </Pane>
            <AxisCell>
              <AxisBox $boxed>
                <Scale top={807} height={100} items={[['1.00', 824, 824], ['0.50', 867, 867]]} minor={[845]} />
              </AxisBox>
            </AxisCell>
          </ChartRow>

          <ChartRow $h={16}>
            <TimeAxis>
              {timeCells.map(([label, w, picked], i) => (
                <TimeCell key={`${label}${i}`} $w={w} $first={i === 0} $picked={picked}>{label}</TimeCell>
              ))}
            </TimeAxis>
            <AxisCell>
              <AxisCaption>日线</AxisCaption>
            </AxisCell>
          </ChartRow>

          <ChartRow $h={17}>
            <TabStrip>
              {tabs.map(([label, w]) => (
                <TabItem key={label} $w={w}>{label}</TabItem>
              ))}
              <TabItem $w={32} $active>设置</TabItem>
              <TabItem $w={30} $push $left $bare>模板</TabItem>
            </TabStrip>
            <AxisCell />
          </ChartRow>

          <ChartRow $open>
            <TabStrip $bare>
              <TabItem $w={37}>扩展∧</TabItem>
              <TabItem $w={55}>关联报价</TabItem>
            </TabStrip>
            <AxisCell />
          </ChartRow>
        </ChartColumn>

        <QuotePanel>
          <QuoteTitle>
            <RiskFlag>R</RiskFlag>
            <StockCode>300378</StockCode>
            <StockName>鼎捷软件°</StockName>
          </QuoteTitle>
          <QuoteSection $h={20}>
            <QuoteRow>委比<QuoteValue $color="#ff3030">36.95%</QuoteValue><QuoteSide>委差</QuoteSide></QuoteRow>
          </QuoteSection>
          <QuoteSection $h={97}>
            {sellRows.map(([label, value, color]) => (
              <QuoteRow key={label}>{label}<QuoteValue $color={color}>{value}</QuoteValue></QuoteRow>
            ))}
          </QuoteSection>
          <QuoteSection $h={97}>
            {buyRows.map(([label, value]) => (
              <QuoteRow key={label}>{label}<QuoteValue $color="#00f000">{value}</QuoteValue></QuoteRow>
            ))}
          </QuoteSection>
          <QuoteSection $h={97}>
            {statRows.map(([label, value, color, side]) => (
              <QuoteRow key={label}>{label}<QuoteValue $color={color}>{value}</QuoteValue><QuoteSide>{side}</QuoteSide></QuoteRow>
            ))}
          </QuoteSection>
          <QuoteSection $h={61}>
            {ratioRows.map(([label, value, color, side]) => (
              <QuoteRow key={label}>{label}<QuoteValue $color={color}>{value}</QuoteValue><QuoteSide>{side}</QuoteSide></QuoteRow>
            ))}
          </QuoteSection>
          <QuoteSection $h={42}>
            <FlowRow>净流入额<FlowValue>-968.6万</FlowValue></FlowRow>
            <FlowRow>大宗流入<FlowValue>-291.6万</FlowValue></FlowRow>
          </QuoteSection>
          {ticks.map(([time, price, volume], i) => (
            <TickRow key={`${time}${i}`}>
              <TickTime>{time}</TickTime>
              <TickPrice>{price}</TickPrice>
              <TickVolume>{volume}</TickVolume>
            </TickRow>
          ))}
        </QuotePanel>
      </Workspace>

      <Watermark>
        <WatermarkTop>
          <WatermarkSite>股海网</WatermarkSite>
          <WatermarkSlogan>股票软件资源分享</WatermarkSlogan>
        </WatermarkTop>
        <WatermarkUrl>Www.Guhai.com.cn</WatermarkUrl>
      </Watermark>
    </Frame>
  );
}
